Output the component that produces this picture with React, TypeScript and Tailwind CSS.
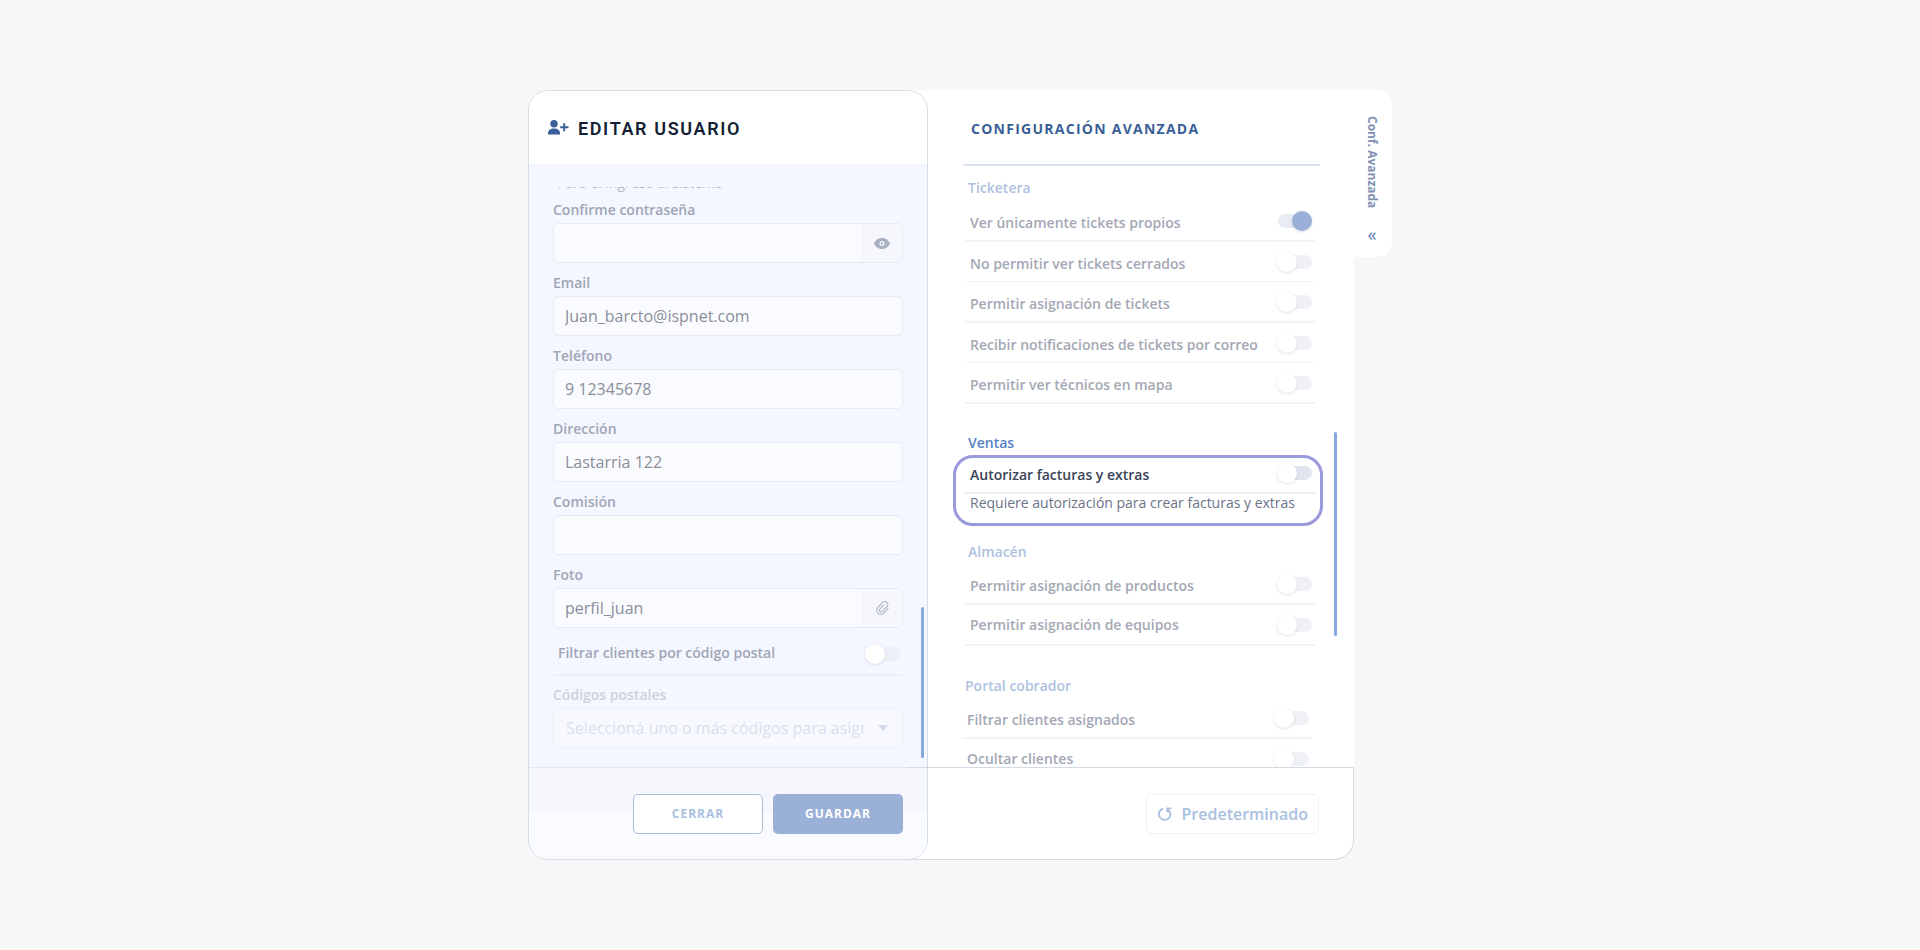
import { useId, type ReactNode } from 'react';

function Toggle({ id, on = false, tone }: { id: string; on?: boolean; tone: string }) {
  return (
    <input
      id={id}
      type="checkbox"
      role="switch"
      defaultChecked={on}
      className={`relative h-3.5 w-[34px] shrink-0 cursor-pointer appearance-none rounded-full before:absolute before:-left-px before:-top-[3px] before:size-5 before:rounded-full before:bg-white before:shadow-[0_1px_3px_rgba(60,70,110,0.16)] before:content-[''] checked:before:left-3.5 checked:before:bg-[#9bb0d8] ${tone}`}
    />
  );
}

function SwitchRow({
  label,
  on,
  thin = false,
  strong = false,
  last = false,
}: {
  label: string;
  on?: boolean;
  thin?: boolean;
  strong?: boolean;
  last?: boolean;
}) {
  const id = useId();
  return (
    <div
      className={`flex items-center justify-between pl-[5px] pr-[3px] ${thin ? 'border-b' : 'border-b-2'} ${
        strong ? 'border-[#e9edf4]' : 'border-[#f3f4f8]'
      }`}
    >
      <label
        htmlFor={id}
        className={`text-sm font-semibold leading-5 ${last ? 'pb-[9px] pt-2.5' : 'pb-[7px] pt-3'} ${
          strong ? 'text-[#3b4459]' : 'text-[#a3a8b4]'
        }`}
      >
        {label}
      </label>
      <Toggle id={id} on={on} tone={strong ? 'bg-[#e1e5ee]' : on ? 'bg-[#e8ecf5]' : 'bg-[#f0f1f6]'} />
    </div>
  );
}

function SectionTitle({ children, active = false }: { children: ReactNode; active?: boolean }) {
  return (
    <h3 className={`pl-[3px] text-sm font-semibold leading-5 ${active ? 'text-[#5682c4]' : 'text-[#aec2e0]'}`}>
      {children}
    </h3>
  );
}

function Field({ label, value = '', type = 'text', action }: { label: string; value?: string; type?: string; action?: ReactNode }) {
  const id = useId();
  return (
    <div className="flex flex-col gap-[3px]">
      <label htmlFor={id} className="text-sm font-semibold leading-5 text-[#9fa5b6]">
        {label}
      </label>
      <div className="flex h-10 overflow-hidden rounded-[5px] border border-[#e7eaf4] bg-[#fafbff]">
        <input
          id={id}
          type={type}
          defaultValue={value}
          className="min-w-0 flex-1 bg-transparent px-[11px] text-base text-[#8b8e99] outline-none"
        />
        {action}
      </div>
    </div>
  );
}

function EyeIcon() {
  return (
    <svg viewBox="0 0 16 11" className="h-[11px] w-4" fill="#a9b0c2">
      <path
        fillRule="evenodd"
        d="M8 0C4.4 0 1.3 2.2 0 5.5 1.3 8.8 4.4 11 8 11s6.700-2.200 8-5.500C14.700 2.200 11.600 0 8 0Zm0 8a2.500 2.500 0 1 1 0-5 2.500 2.500 0 0 1 0 5Zm0-1.300a1.200 1.200 0 1 0 0-2.400 1.200 1.200 0 0 0 0 2.400Z"
      />
    </svg>
  );
}

function ClipIcon() {
  return (
    <svg viewBox="0 0 24 24" className="size-[15px]" fill="none" stroke="#b3b9ca" strokeWidth="2" strokeLinecap="round">
      <path
        transform="rotate(42 12 12)"
        d="M18.500 6v10a6.500 6.500 0 0 1-13 0V5a4.800 4.800 0 0 1 9.600 0v10.500a2.800 2.800 0 0 1-5.600 0V7"
      />
    </svg>
  );
}

function UserPlusIcon() {
  return (
    <svg viewBox="0 0 21 15" className="h-[15px] w-[21px]" fill="#3a5f9b">
      <circle cx="6" cy="3.700" r="3.700" />
      <path d="M0 14.500v-1.300C0 10.400 2.400 8.500 6 8.500s6 1.900 6 4.700v1.300Z" />
      <path d="M15.200 3.300h2v3h3.300v2h-3.300v3h-2v-3h-3v-2h3Z" />
    </svg>
  );
}

function ResetIcon() {
  return (
    <svg viewBox="0 0 14 14" className="size-3.5" fill="none" stroke="#a9bfe0" strokeWidth="1.800">
      <path d="M4.900 1.700A5.700 5.700 0 1 0 11 3.500" />
      <path d="M8.400.400h5.200v1.700h-2.200l-.2 3.200-2.800-.1Z" fill="#a9bfe0" stroke="none" />
    </svg>
  );
}

export default function App() {
  return (
    <main className="flex min-h-screen items-center justify-center bg-[#f7f7f7] font-['Open_Sans','Noto_Sans',sans-serif]">
      <div className="flex items-start">
        <div className="flex items-stretch rounded-bl-[20px] rounded-br-[20px] rounded-tl-[20px] bg-white">
          <form className="relative flex w-[400px] flex-col overflow-hidden rounded-[20px] border border-[#d5dce8] bg-white">
            <header className="flex h-[73px] items-center gap-[9px] pl-[19px]">
              <UserPlusIcon />
              <h1 className="pt-0.5 font-['Roboto',sans-serif] text-lg font-semibold leading-6 tracking-[0.09em] text-[#141f36]">
                EDITAR USUARIO
              </h1>
            </header>
            <div className="flex flex-col bg-[#f4f7ff] px-6 pb-[19px] pt-[23px]">
              <div className="flex h-[13px] flex-col justify-end overflow-hidden">
                <p className="pb-[7px] pl-1 text-sm leading-5 text-[#b4bac8]">Para el ingreso al sistema</p>
              </div>
              <div className="flex flex-col gap-2.5">
                <Field
                  label="Confirme contraseña"
                  type="password"
                  action={
                    <button type="button" aria-label="Mostrar contraseña" className="flex w-10 items-center justify-center bg-[#f6f7fc]">
                      <EyeIcon />
                    </button>
                  }
                />
                <Field label="Email" value="Juan_barcto@ispnet.com" />
                <Field label="Teléfono" value="9 12345678" />
                <Field label="Dirección" value="Lastarria 122" />
                <Field label="Comisión" />
                <Field
                  label="Foto"
                  value="perfil_juan"
                  action={
                    <button type="button" aria-label="Adjuntar foto" className="flex w-10 items-center justify-center bg-[#f6f7fc]">
                      <ClipIcon />
                    </button>
                  }
                />
              </div>
              <div className="mt-2 flex items-center justify-between border-b-2 border-[#edf0f8] pb-0.5 pl-[5px] pr-[3px]">
                <label htmlFor="filtrar-cp" className="pb-[9px] pt-[7px] text-sm font-semibold leading-5 text-[#9fa5b6]">
                  Filtrar clientes por código postal
                </label>
                <Toggle id="filtrar-cp" tone="bg-[#edeff6] before:bg-[#fbfcff]" />
              </div>
              <div className="mt-[9px] flex flex-col gap-[3px]">
                <label htmlFor="codigos" className="text-sm font-semibold leading-5 text-[#cdd1de]">
                  Códigos postales
                </label>
                <div className="relative flex h-10 items-center rounded-[5px] border border-[#edf0f9] bg-[#f7f9ff]">
                  <select
                    id="codigos"
                    className="h-full min-w-0 flex-1 appearance-none bg-transparent pl-3 pr-[38px] text-base text-[#dadfec] outline-none"
                  >
                    <option>Seleccioná uno o más códigos para asignar</option>
                  </select>
                  <svg viewBox="0 0 10 6" className="pointer-events-none absolute right-3.5 h-1.5 w-2.5" fill="#d3d9ea">
                    <path d="M0 0h10L5 6Z" />
                  </svg>
                </div>
              </div>
            </div>
            <footer className="flex flex-1 items-start justify-end gap-2.5 border-t border-[#e1e6f2] bg-linear-to-b from-[#f5f7fc] from-[43px] to-[#f9fbff] to-[43px] px-6 pb-[25px] pt-[26px]">
              <button type="button" className="h-10 w-[130px] rounded-[5px] border border-[#a6bad9] bg-white text-xs font-bold tracking-[1px] text-[#a9bfe0]">
                CERRAR
              </button>
              <button type="submit" className="h-10 w-[130px] rounded-[5px] bg-[#9ab0d7] text-xs font-bold tracking-[1px] text-white">
                GUARDAR
              </button>
            </footer>
            <span className="absolute bottom-[101px] right-[3px] h-[151px] w-[3px] rounded-full bg-[#84a8df]" />
          </form>

          <section className="relative flex w-[426px] flex-col">
            <header className="ml-[35px] mr-[34px] flex h-[76px] items-center border-b-2 border-[#d9e1ef] pl-2">
              <h2 className="pt-1 text-sm font-bold leading-5 tracking-[0.09em] text-[#3a5f98]">CONFIGURACIÓN AVANZADA</h2>
            </header>
            <div className="flex h-0 grow flex-col overflow-hidden pl-[37px] pr-[39px]">
              <div className="pt-3">
                <SectionTitle>Ticketera</SectionTitle>
                <div className="pt-[3px]">
                  <SwitchRow label="Ver únicamente tickets propios" on />
                  <SwitchRow label="No permitir ver tickets cerrados" thin />
                  <SwitchRow label="Permitir asignación de tickets" />
                  <SwitchRow label="Recibir notificaciones de tickets por correo" thin />
                  <SwitchRow label="Permitir ver técnicos en mapa" />
                </div>
              </div>
              <div className="pt-[29px]">
                <SectionTitle active>Ventas</SectionTitle>
                <div className="-ml-3 -mr-2 mt-0.5 rounded-[20px] border-[3px] border-[#9a99dc] pb-[11px] pl-[9px] pr-[5px]">
                  <div className="-mt-[5px]">
                    <SwitchRow label="Autorizar facturas y extras" strong />
                    <p className="pl-[5px] text-sm leading-[18px] text-[#6b7387]">Requiere autorización para crear facturas y extras</p>
                  </div>
                </div>
              </div>
              <div className="pt-4">
                <SectionTitle>Almacén</SectionTitle>
                <div className="pt-0.5">
                  <SwitchRow label="Permitir asignación de productos" />
                  <SwitchRow label="Permitir asignación de equipos" last />
                </div>
              </div>
              <div className="-ml-[3px] mr-[3px] pt-[30px]">
                <SectionTitle>Portal cobrador</SectionTitle>
                <div className="pt-0.5">
                  <SwitchRow label="Filtrar clientes asignados" />
                  <SwitchRow label="Ocultar clientes" last />
                </div>
              </div>
            </div>
            <footer className="-ml-5 flex items-start justify-end rounded-br-[20px] border-b border-r border-t border-[#d3dce6] pb-[25px] pr-[34px] pt-[26px]">
              <button type="button" className="flex h-10 items-center gap-2.5 rounded-[5px] border border-[#edf0f5] pl-[11px] pr-2.5 text-base font-semibold text-[#a9bfe0]">
                <ResetIcon />
                Predeterminado
              </button>
            </footer>
            <span className="absolute bottom-[224px] right-[17px] h-[204px] w-[3px] rounded-full bg-[#84a8df]" />
          </section>
        </div>

        <button type="button" className="flex w-[38px] flex-col items-center gap-4 rounded-r-[14px] bg-white pb-[13px] pr-0.5 pt-[26px]">
          <span className="text-xs font-bold leading-4 text-[#8090b0] [writing-mode:vertical-rl]">Conf. Avanzada</span>
          <span className="text-lg leading-5 text-[#5c7bb0]">«</span>
        </button>
      </div>
    </main>
  );
}
